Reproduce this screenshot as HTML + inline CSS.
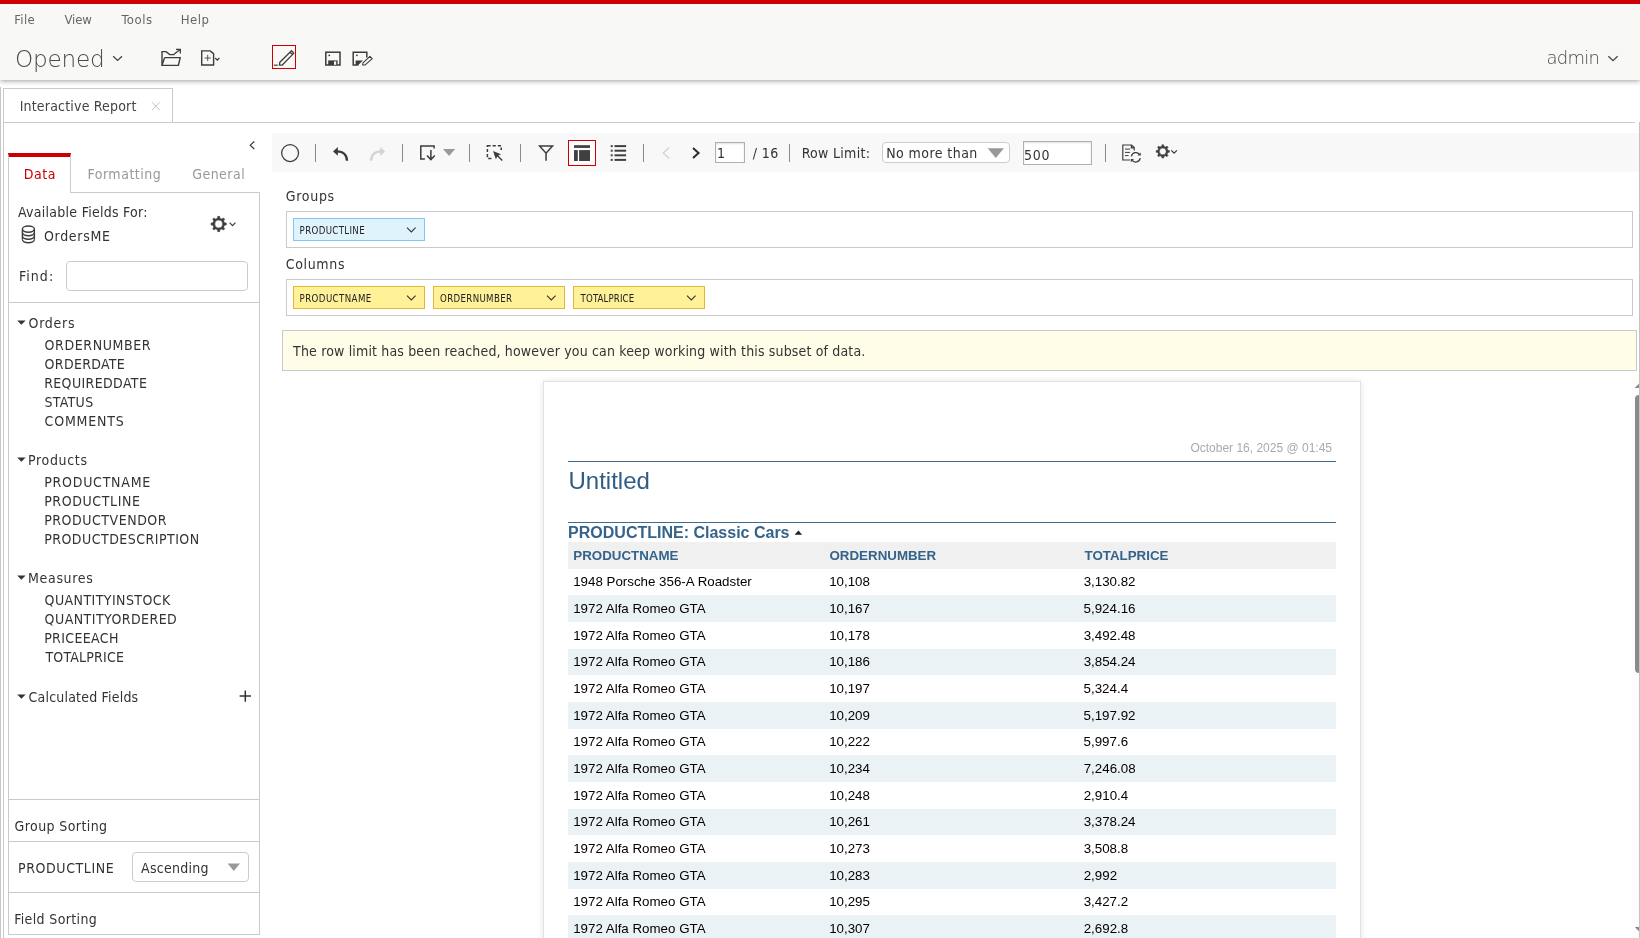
<!DOCTYPE html>
<html lang="en"><head><meta charset="utf-8"><title>Interactive Report</title>
<style>
html,body{margin:0;padding:0;}
body{width:1640px;height:938px;overflow:hidden;background:#fff;position:relative;font-family:"Liberation Sans",sans-serif;}
div,span,svg,header,nav,aside,section,main{position:absolute;box-sizing:border-box;}
.grp{left:0;top:0;width:0;height:0;}
.t{white-space:pre;line-height:1;color:#333;font-family:"Liberation Sans",sans-serif;}
.u{font-family:"DejaVu Sans Condensed","Liberation Sans",sans-serif;}
.lt{font-family:"DejaVu Sans Light","DejaVu Sans","Liberation Sans",sans-serif;font-weight:200;}
#redbar{left:0;top:0;width:1640px;height:4px;background:#cc0000;}
#header{left:0;top:4px;width:1640px;height:76px;background:#f8f8f6;box-shadow:0 1px 5px rgba(0,0,0,.38);}
#editbtn{left:272px;top:45px;width:24px;height:24px;border:1px solid #cc0000;}
#edge0{left:0;top:87px;width:1px;height:851px;background:#c6c6c6;}
#edge1{left:3px;top:88px;width:1px;height:850px;background:#cacaca;}
#tab{left:3px;top:88px;width:170px;height:35px;border:1px solid #cacaca;background:#fff;}
#tabline{left:3px;top:122px;width:1632px;height:1px;background:#cacaca;}
#rightedge{left:1639px;top:122px;width:1px;height:816px;background:#c4c4c4;}
/* side panel */
#ptab{left:8px;top:153px;width:63px;height:40px;border:1px solid #cacaca;border-top:4px solid #cc0000;border-bottom:none;background:#fff;}
#panel{left:8px;top:192px;width:252px;height:743px;border:1px solid #cacaca;}
#ptabcover{left:9px;top:192px;width:61px;height:1px;background:#fff;}
.hl{left:9px;width:250px;height:1px;background:#cacaca;}
#find{left:66px;top:261px;width:182px;height:30px;border:1px solid #ccc;border-radius:4px;background:#fff;}
#sortsel{left:132px;top:852px;width:117px;height:30px;border:1px solid #ccc;border-radius:4px;background:#fff;}
/* toolbar */
#toolbar{left:272px;top:133px;width:1368px;height:39px;background:#f8f8f8;}
.sep{top:144px;width:1px;height:18px;background:#8a8a8a;}
#layoutbtn{left:568px;top:140px;width:28px;height:26px;border:1px solid #cc0000;background:#fdfdfd;}
#pageinp{left:715px;top:142px;width:30px;height:21px;border:1px solid #b0b0b0;background:#fff;box-shadow:inset 0 1px 2px rgba(0,0,0,.12);}
#limsel{left:882px;top:142px;width:128px;height:21px;border:1px solid #ccc;border-radius:4px;background:#fff;}
#liminp{left:1023px;top:141px;width:69px;height:24px;border:1px solid #b0b0b0;background:#fff;box-shadow:inset 0 1px 2px rgba(0,0,0,.12);}
/* layout zones */
.zone{left:286px;width:1347px;height:37px;border:1px solid #cacaca;background:#fff;}
.chip{width:132px;height:23px;border:1px solid;}
.chip.g{background:#dff3fc;border-color:#80c8f0;}
.chip.c{background:#fef198;border-color:#e0b93a;}
#msg{left:282px;top:330px;width:1355px;height:41px;border:1px solid #cacaca;background:#fffde7;}
/* report */
#page{left:543px;top:381px;width:818px;height:600px;background:#fff;border:1px solid #e2e2e2;box-shadow:0 0 7px rgba(0,0,0,.10);}
.rule{left:568px;width:768px;height:1px;background:#3f6b8f;}
.row{left:568px;width:768px;height:26.67px;}
.row.h{background:#f0f0f0;}
.row.a{background:#ebf2f6;}
/* scrollbar */
#sbtrack{left:1632px;top:377px;width:7px;height:561px;background:#fcfcfc;}
#sbthumb{left:1635px;top:395px;width:8px;height:278px;background:#8a8a8a;border-radius:4px;}
#sbclip{left:1632px;top:381px;width:7px;height:557px;overflow:hidden;}
.tx{left:0;top:0;width:1640px;height:938px;will-change:transform;}

</style></head>
<body>
<div id="app-frame" class="grp">
<div id="edge0"></div>
<div id="edge1"></div>
</div>
<header id="app-header" class="grp">
<div id="header"></div>
<div id="redbar"></div>
<div id="editbtn"></div>
<svg style="left:110px;top:52px" width="16" height="12" viewBox="110 52 16 12" fill="none" stroke-linecap="butt"><path d="M113.2 56.2 L117.6 60.4 L122 56.2" stroke="#444" stroke-width="1.3"/></svg>
<svg style="left:158px;top:46px" width="26" height="24" viewBox="158 46 26 24" fill="none" stroke-linecap="butt"><path d="M162 65.4 V51.6 H166 L169.8 54.6 H174.4 M164.6 57.6 H180.2 L178.4 65.4 H162 L164.6 57.6" stroke="#3c3c3c" stroke-width="1.4" stroke-linejoin="miter"/><path d="M174 54.2 L180 49.5 M176 49.3 H180.3 V53.6" stroke="#3c3c3c" stroke-width="1.3"/></svg>
<svg style="left:198px;top:46px" width="26" height="24" viewBox="198 46 26 24" fill="none" stroke-linecap="butt"><path d="M201.7 50.9 H210.2 L213.6 53.6 V65 H201.7 Z" stroke="#3c3c3c" stroke-width="1.4"/><path d="M204.6 58 H210.8 M207.7 54.9 V61" stroke="#555" stroke-width="1"/><path d="M215.2 58 L217.3 60.1 L219.4 58" stroke="#3c3c3c" stroke-width="1.3"/></svg>
<svg style="left:272px;top:45px" width="24" height="24" viewBox="272 45 24 24" fill="none" stroke-linecap="butt"><path d="M279.4 65.1 L279.8 62.3 L291.5 50.8 L293.9 53.1 L282.3 65 Z M290 52.3 L292.5 54.6" stroke="#3c3c3c" stroke-width="1.3" stroke-linejoin="round"/><path d="M273.8 65.2 H277.8" stroke="#3c3c3c" stroke-width="1.2"/></svg>
<svg style="left:322px;top:48px" width="22" height="22" viewBox="322 48 22 22" fill="none" stroke-linecap="butt"><rect x="325.8" y="52.2" width="14.2" height="12.8" stroke="#3c3c3c" stroke-width="1.5"/><path d="M328.2 60.4 H337.6 V65 H328.2Z" fill="#3c3c3c"/><rect x="334" y="61.4" width="2.2" height="3.4" fill="#f8f8f6"/><circle cx="329.3" cy="55.3" r="0.9" fill="#3c3c3c"/></svg>
<svg style="left:350px;top:48px" width="26" height="22" viewBox="350 48 26 22" fill="none" stroke-linecap="butt"><path d="M366.8 57.5 V52.2 H353.2 V65 H358.5" stroke="#3c3c3c" stroke-width="1.5"/><path d="M355.6 60.4 H363 L358.2 65 H355.6Z" fill="#3c3c3c"/><circle cx="356.9" cy="55.3" r="0.9" fill="#3c3c3c"/><path d="M362.6 65 L363 62.8 L369.9 56.4 L372.2 58.6 L365.2 64.9 Z" stroke="#3c3c3c" stroke-width="1.1" stroke-linejoin="round"/></svg>
<svg style="left:1604px;top:52px" width="16" height="12" viewBox="1604 52 16 12" fill="none" stroke-linecap="butt"><path d="M1608.4 56.3 L1613 60.6 L1617.6 56.3" stroke="#444" stroke-width="1.3"/></svg>
<div class="tx">
<span class="t u" style="left:14.22px;top:13px;font-size:13px;color:#666;letter-spacing:0.369px;">File</span>
<span class="t u" style="left:64.41px;top:13px;font-size:13px;color:#666;letter-spacing:-0.116px;">View</span>
<span class="t u" style="left:121.40px;top:13px;font-size:13px;color:#666;letter-spacing:0.506px;">Tools</span>
<span class="t u" style="left:180.82px;top:13px;font-size:13px;color:#666;letter-spacing:0.485px;">Help</span>
<span class="t lt" style="left:15.00px;top:47px;font-size:23.2px;color:#4a4a4a;letter-spacing:-0.262px;">Opened</span>
<span class="t lt" style="left:1546.45px;top:49px;font-size:18px;color:#4a4a4a;letter-spacing:-0.720px;">admin</span>
</div>
</header>
<nav id="tab-bar" class="grp">
<div id="tabline"></div>
<div id="tab"></div>
<svg style="left:148px;top:98px" width="16" height="16" viewBox="148 98 16 16" fill="none" stroke-linecap="butt"><path d="M152 102.2 L159.6 110 M159.6 102.2 L152 110" stroke="#c4c4c4" stroke-width="1"/></svg>
<div class="tx">
<span class="t u" style="left:19.64px;top:99px;font-size:14px;color:#444;letter-spacing:0.192px;">Interactive Report</span>
</div>
</nav>
<aside id="side-panel" class="grp">
<div id="panel"></div>
<div id="ptab"></div>
<div id="ptabcover"></div>
<div class="hl" style="top:302px"></div>
<div class="hl" style="top:799px"></div>
<div class="hl" style="top:841px"></div>
<div class="hl" style="top:892px"></div>
<div id="find"></div>
<div id="sortsel"></div>
<svg style="left:246px;top:138px" width="12" height="14" viewBox="246 138 12 14" fill="none" stroke-linecap="butt"><path d="M254.3 141.5 L250.2 145.2 L254.3 149" stroke="#333" stroke-width="1.1"/></svg>
<svg style="left:20px;top:224px" width="18" height="22" viewBox="20 224 18 22" fill="none" stroke-linecap="butt"><ellipse cx="28.4" cy="229.1" rx="6" ry="3.1" stroke="#3c3c3c" stroke-width="1.35"/><path d="M22.4 229.1 V239.6 M34.4 229.1 V239.6" stroke="#3c3c3c" stroke-width="1.35"/><path d="M22.4 232.6 A6 3.1 0 0 0 34.4 232.6" stroke="#3c3c3c" stroke-width="1.35"/><path d="M22.4 236.1 A6 3.1 0 0 0 34.4 236.1" stroke="#3c3c3c" stroke-width="1.35"/><path d="M22.4 239.6 A6 3.1 0 0 0 34.4 239.6" stroke="#3c3c3c" stroke-width="1.35"/></svg>
<svg style="left:208px;top:213px" width="32" height="22" viewBox="208 213 32 22" fill="none" stroke-linecap="butt"><path d="M217.55 218.21 L217.67 216.37 L219.73 216.37 L219.85 218.21 L221.98 219.09 L223.37 217.88 L224.82 219.33 L223.61 220.72 L224.49 222.85 L226.33 222.97 L226.33 225.03 L224.49 225.15 L223.61 227.28 L224.82 228.67 L223.37 230.12 L221.98 228.91 L219.85 229.79 L219.73 231.63 L217.67 231.63 L217.55 229.79 L215.42 228.91 L214.03 230.12 L212.58 228.67 L213.79 227.28 L212.91 225.15 L211.07 225.03 L211.07 222.97 L212.91 222.85 L213.79 220.72 L212.58 219.33 L214.03 217.88 L215.42 219.09Z M214.80 224.00 a3.9 3.9 0 1 0 7.8 0 a3.9 3.9 0 1 0 -7.8 0Z" fill="#3c3c3c" fill-rule="evenodd" stroke="#3c3c3c" stroke-width="0.5" stroke-linejoin="round"/><path d="M229.6 222.6 L232.5 225.6 L235.4 222.6" stroke="#3c3c3c" stroke-width="1.2"/></svg>
<svg style="left:16px;top:319px" width="12" height="8" viewBox="16 319 12 8" fill="none" stroke-linecap="butt"><path d="M17.2 320.4 H25.6 L21.4 324.8Z" fill="#333"/></svg>
<svg style="left:16px;top:456px" width="12" height="8" viewBox="16 456 12 8" fill="none" stroke-linecap="butt"><path d="M17.2 457.4 H25.6 L21.4 461.8Z" fill="#333"/></svg>
<svg style="left:16px;top:574px" width="12" height="8" viewBox="16 574 12 8" fill="none" stroke-linecap="butt"><path d="M17.2 575.4 H25.6 L21.4 579.8Z" fill="#333"/></svg>
<svg style="left:16px;top:693px" width="12" height="8" viewBox="16 693 12 8" fill="none" stroke-linecap="butt"><path d="M17.2 694.4 H25.6 L21.4 698.8Z" fill="#333"/></svg>
<svg style="left:238px;top:688px" width="16" height="16" viewBox="238 688 16 16" fill="none" stroke-linecap="butt"><path d="M239.6 696.1 H251 M245.3 690.4 V701.8" stroke="#333" stroke-width="1.5"/></svg>
<svg style="left:226px;top:862px" width="16" height="10" viewBox="226 862 16 10" fill="none" stroke-linecap="butt"><path d="M227.6 863.6 H240 L233.8 871Z" fill="#999"/></svg>
<div class="tx">
<span class="t u" style="left:23.75px;top:167px;font-size:14px;color:#cc0000;letter-spacing:0.573px;">Data</span>
<span class="t u" style="left:87.45px;top:167px;font-size:14px;color:#999;letter-spacing:0.519px;">Formatting</span>
<span class="t u" style="left:192.22px;top:167px;font-size:14px;color:#999;letter-spacing:0.465px;">General</span>
<span class="t u" style="left:18.01px;top:205px;font-size:14px;letter-spacing:0.272px;">Available Fields For:</span>
<span class="t u" style="left:43.92px;top:229px;font-size:14px;letter-spacing:0.703px;">OrdersME</span>
<span class="t u" style="left:19.05px;top:269px;font-size:14px;letter-spacing:1.033px;">Find:</span>
<span class="t u" style="left:28.52px;top:316px;font-size:14px;letter-spacing:0.737px;">Orders</span>
<span class="t u" style="left:44.62px;top:338px;font-size:14px;letter-spacing:0.592px;">ORDERNUMBER</span>
<span class="t u" style="left:44.62px;top:357px;font-size:14px;letter-spacing:0.304px;">ORDERDATE</span>
<span class="t u" style="left:44.15px;top:376px;font-size:14px;letter-spacing:0.374px;">REQUIREDDATE</span>
<span class="t u" style="left:44.40px;top:395px;font-size:14px;letter-spacing:0.345px;">STATUS</span>
<span class="t u" style="left:44.62px;top:414px;font-size:14px;letter-spacing:0.805px;">COMMENTS</span>
<span class="t u" style="left:28.05px;top:453px;font-size:14px;letter-spacing:0.655px;">Products</span>
<span class="t u" style="left:44.15px;top:475px;font-size:14px;letter-spacing:0.758px;">PRODUCTNAME</span>
<span class="t u" style="left:44.15px;top:494px;font-size:14px;letter-spacing:0.604px;">PRODUCTLINE</span>
<span class="t u" style="left:44.15px;top:513px;font-size:14px;letter-spacing:0.533px;">PRODUCTVENDOR</span>
<span class="t u" style="left:44.15px;top:532px;font-size:14px;letter-spacing:0.476px;">PRODUCTDESCRIPTION</span>
<span class="t u" style="left:28.05px;top:571px;font-size:14px;letter-spacing:0.664px;">Measures</span>
<span class="t u" style="left:44.62px;top:593px;font-size:14px;letter-spacing:0.421px;">QUANTITYINSTOCK</span>
<span class="t u" style="left:44.62px;top:612px;font-size:14px;letter-spacing:0.450px;">QUANTITYORDERED</span>
<span class="t u" style="left:44.15px;top:631px;font-size:14px;letter-spacing:0.367px;">PRICEEACH</span>
<span class="t u" style="left:45.40px;top:650px;font-size:14px;letter-spacing:0.203px;">TOTALPRICE</span>
<span class="t u" style="left:28.52px;top:690px;font-size:14px;letter-spacing:0.206px;">Calculated Fields</span>
<span class="t u" style="left:14.62px;top:819px;font-size:14px;letter-spacing:0.406px;">Group Sorting</span>
<span class="t u" style="left:18.05px;top:861px;font-size:14px;letter-spacing:0.586px;">PRODUCTLINE</span>
<span class="t u" style="left:141.01px;top:861px;font-size:14px;letter-spacing:0.281px;">Ascending</span>
<span class="t u" style="left:14.15px;top:912px;font-size:14px;letter-spacing:0.369px;">Field Sorting</span>
</div>
</aside>
<section id="report-toolbar" class="grp">
<div id="toolbar"></div>
<div class="sep" style="left:315px"></div>
<div class="sep" style="left:402px"></div>
<div class="sep" style="left:469px"></div>
<div class="sep" style="left:520px"></div>
<div class="sep" style="left:643px"></div>
<div class="sep" style="left:789px"></div>
<div class="sep" style="left:1105px"></div>
<div id="layoutbtn"></div>
<div id="pageinp"></div>
<div id="limsel"></div>
<div id="liminp"></div>
<svg style="left:986px;top:147px" width="20" height="12" viewBox="986 147 20 12" fill="none" stroke-linecap="butt"><path d="M987.7 148.2 H1003.9 L995.8 158Z" fill="#999"/></svg>
<svg style="left:279px;top:142px" width="22" height="22" viewBox="279 142 22 22" fill="none" stroke-linecap="butt"><circle cx="290.1" cy="153.05" r="8.45" stroke="#3c3c3c" stroke-width="1.25"/></svg>
<svg style="left:331px;top:144px" width="20" height="19" viewBox="331 144 20 19" fill="none" stroke-linecap="butt"><path d="M337 151.4 C343 151.4 346.8 155 347 160.7" stroke="#3c3c3c" stroke-width="2.4"/><path d="M333 151.4 L337.9 147 V155.8Z" fill="#3c3c3c"/></svg>
<svg style="left:367px;top:144px" width="20" height="19" viewBox="367 144 20 19" fill="none" stroke-linecap="butt"><path d="M381.1 151.4 C375.1 151.4 371.3 155 371.1 160.7" stroke="#d2d2d2" stroke-width="2.4"/><path d="M385.1 151.4 L380.2 147 V155.8Z" fill="#d2d2d2"/></svg>
<svg style="left:418px;top:143px" width="40" height="20" viewBox="418 143 40 20" fill="none" stroke-linecap="butt"><path d="M424.9 158.9 H420.8 V146.1 H434.1 V148.6" stroke="#3c3c3c" stroke-width="1.5"/><path d="M430.9 150.1 V159.6 M427 155.4 L430.9 159.6 L434.8 155.4" stroke="#3c3c3c" stroke-width="1.5"/><path d="M443 149.1 H455.2 L449.1 155.9Z" fill="#999"/></svg>
<svg style="left:484px;top:143px" width="22" height="20" viewBox="484 143 22 20" fill="none" stroke-linecap="butt"><rect x="487.4" y="145.7" width="13.8" height="12.8" stroke="#3c3c3c" stroke-width="1.5" stroke-dasharray="3.2 2"/><rect x="492" y="150" width="12" height="12" fill="#f8f8f8"/><path d="M493 151 L501 154.2 L498.3 155.6 L502.8 160 L501.8 161 L497.3 156.6 L495.9 159.3Z" fill="#3c3c3c"/></svg>
<svg style="left:536px;top:143px" width="20" height="20" viewBox="536 143 20 20" fill="none" stroke-linecap="butt"><path d="M539.6 146.1 H552.5 L546.05 153.2 Z M546.05 153 V160.7" stroke="#3c3c3c" stroke-width="1.5" stroke-linejoin="miter"/></svg>
<svg style="left:572px;top:144px" width="20" height="18" viewBox="572 144 20 18" fill="none" stroke-linecap="butt"><rect x="574" y="145.2" width="16" height="2.7" fill="#404040"/><rect x="574" y="150.1" width="3.8" height="10.9" fill="#404040"/><rect x="579.1" y="150.1" width="10.9" height="10.9" fill="#404040"/></svg>
<svg style="left:609px;top:144px" width="19" height="18" viewBox="609 144 19 18" fill="none" stroke-linecap="butt"><rect x="610.7" y="145.1" width="2" height="2" fill="#404040"/><rect x="614.5" y="145.1" width="11.6" height="2" fill="#404040"/><rect x="610.7" y="149.7" width="2" height="2" fill="#404040"/><rect x="614.5" y="149.7" width="11.6" height="2" fill="#404040"/><rect x="610.7" y="154.3" width="2" height="2" fill="#404040"/><rect x="614.5" y="154.3" width="11.6" height="2" fill="#404040"/><rect x="610.7" y="158.9" width="2" height="2" fill="#404040"/><rect x="614.5" y="158.9" width="11.6" height="2" fill="#404040"/></svg>
<svg style="left:660px;top:145px" width="12" height="16" viewBox="660 145 12 16" fill="none" stroke-linecap="butt"><path d="M669.2 147.4 L663.2 152.9 L669.2 158.4" stroke="#d4d4d4" stroke-width="1.4"/></svg>
<svg style="left:690px;top:145px" width="12" height="16" viewBox="690 145 12 16" fill="none" stroke-linecap="butt"><path d="M693 148 L698.6 153 L693 158.1" stroke="#2c2c2c" stroke-width="2"/></svg>
<svg style="left:1120px;top:143px" width="24" height="22" viewBox="1120 143 24 22" fill="none" stroke-linecap="butt"><path d="M1130 160 H1122.8 V145 H1131.6 L1134.2 147.6 V150.5 M1131.4 145 V147.8 H1134.2" stroke="#3c3c3c" stroke-width="1.2"/><path d="M1125 149.1 H1130.1 M1125 152.4 H1130.1 M1125 155.6 H1128.6" stroke="#3c3c3c" stroke-width="1"/><path d="M1131.4 156.4 A4.5 4.5 0 0 1 1139.6 154.6 M1140.2 158.2 A4.5 4.5 0 0 1 1132 160" stroke="#3c3c3c" stroke-width="1.3"/><path d="M1140.8 152.4 V155.6 H1137.6Z M1130.8 162.2 V159 H1134Z" fill="#3c3c3c"/></svg>
<svg style="left:1153px;top:142px" width="28" height="20" viewBox="1153 142 28 20" fill="none" stroke-linecap="butt"><path d="M1161.79 146.30 L1161.91 144.76 L1163.69 144.76 L1163.81 146.30 L1165.69 147.08 L1166.86 146.07 L1168.13 147.34 L1167.12 148.51 L1167.90 150.39 L1169.44 150.51 L1169.44 152.29 L1167.90 152.41 L1167.12 154.29 L1168.13 155.46 L1166.86 156.73 L1165.69 155.72 L1163.81 156.50 L1163.69 158.04 L1161.91 158.04 L1161.79 156.50 L1159.91 155.72 L1158.74 156.73 L1157.47 155.46 L1158.48 154.29 L1157.70 152.41 L1156.16 152.29 L1156.16 150.51 L1157.70 150.39 L1158.48 148.51 L1157.47 147.34 L1158.74 146.07 L1159.91 147.08Z M1159.40 151.40 a3.4 3.4 0 1 0 6.8 0 a3.4 3.4 0 1 0 -6.8 0Z" fill="#3c3c3c" fill-rule="evenodd" stroke="#3c3c3c" stroke-width="0.5" stroke-linejoin="round"/><path d="M1171.3 150.4 L1174.1 153.2 L1176.9 150.4" stroke="#3c3c3c" stroke-width="1.3"/></svg>
<div class="tx">
<span class="t u" style="left:717.03px;top:146px;font-size:14px;">1</span>
<span class="t u" style="left:752.70px;top:146px;font-size:14px;letter-spacing:0.426px;">/ 16</span>
<span class="t u" style="left:801.65px;top:146px;font-size:14px;letter-spacing:0.304px;">Row Limit:</span>
<span class="t u" style="left:886.15px;top:146px;font-size:14px;letter-spacing:0.436px;">No more than</span>
<span class="t u" style="left:1024.00px;top:148px;font-size:14px;letter-spacing:0.778px;">500</span>
</div>
</section>
<section id="layout-zones" class="grp">
<div class="zone" style="top:211px"></div>
<div class="zone" style="top:279px"></div>
<div class="chip g" style="left:293px;top:218px"></div>
<div class="chip c" style="left:293px;top:286px"></div>
<div class="chip c" style="left:433px;top:286px"></div>
<div class="chip c" style="left:573px;top:286px"></div>
<div id="msg"></div>
<svg style="left:405px;top:225px" width="14" height="10" viewBox="405 225 14 10" fill="none" stroke-linecap="butt"><path d="M407 227.7 L411.3 231.9 L415.6 227.7" stroke="#333" stroke-width="1.1"/></svg>
<svg style="left:405px;top:293px" width="14" height="10" viewBox="405 293 14 10" fill="none" stroke-linecap="butt"><path d="M407 295.7 L411.3 299.9 L415.6 295.7" stroke="#333" stroke-width="1.1"/></svg>
<svg style="left:545px;top:293px" width="14" height="10" viewBox="545 293 14 10" fill="none" stroke-linecap="butt"><path d="M547 295.7 L551.3 299.9 L555.6 295.7" stroke="#333" stroke-width="1.1"/></svg>
<svg style="left:685px;top:293px" width="14" height="10" viewBox="685 293 14 10" fill="none" stroke-linecap="butt"><path d="M687 295.7 L691.3 299.9 L695.6 295.7" stroke="#333" stroke-width="1.1"/></svg>
<div class="tx">
<span class="t u" style="left:285.72px;top:189px;font-size:14px;letter-spacing:0.715px;">Groups</span>
<span class="t u" style="left:285.72px;top:257px;font-size:14px;letter-spacing:0.656px;">Columns</span>
<span class="t u" style="left:299.60px;top:226px;font-size:9.6px;color:#222;letter-spacing:0.351px;">PRODUCTLINE</span>
<span class="t u" style="left:299.60px;top:294px;font-size:9.6px;color:#222;letter-spacing:0.411px;">PRODUCTNAME</span>
<span class="t u" style="left:440.05px;top:294px;font-size:9.6px;color:#222;letter-spacing:0.344px;">ORDERNUMBER</span>
<span class="t u" style="left:580.60px;top:294px;font-size:9.6px;color:#222;letter-spacing:0.123px;">TOTALPRICE</span>
<span class="t u" style="left:293.10px;top:344px;font-size:14px;letter-spacing:0.157px;">The row limit has been reached, however you can keep working with this subset of data.</span>
</div>
</section>
<main id="report-view" class="grp">
<div id="page"></div>
<div class="rule" style="top:461px"></div>
<div class="rule" style="top:522px"></div>
<div class="row h" style="top:542px"></div>
<div class="row a" style="top:595.34px"></div>
<div class="row a" style="top:648.67px"></div>
<div class="row a" style="top:702.00px"></div>
<div class="row a" style="top:755.34px"></div>
<div class="row a" style="top:808.67px"></div>
<div class="row a" style="top:862.01px"></div>
<div class="row a" style="top:915.34px"></div>
<div id="sbtrack"></div>
<div id="sbclip"><div id="sbthumb" style="left:3px;top:14px"></div></div>
<svg style="left:793px;top:529px" width="12" height="8" viewBox="793 529 12 8" fill="none" stroke-linecap="butt"><path d="M794.6 534.8 H802.2 L798.4 530.4Z" fill="#222"/></svg>
<svg style="left:1632px;top:381px" width="8" height="8" viewBox="1632 381 8 8" fill="none" stroke-linecap="butt"><path d="M1634.6 387.9 H1639 V383.7Z" fill="#888"/></svg>
<svg style="left:1632px;top:925px" width="8" height="8" viewBox="1632 925 8 8" fill="none" stroke-linecap="butt"><path d="M1634.8 927 H1639 V931.2Z" fill="#888"/></svg>
<div class="tx">
<span class="t" style="left:1190.40px;top:442px;font-size:12px;color:#aaaaaa;">October 16, 2025 @ 01:45</span>
<span class="t" style="left:568.50px;top:469px;font-size:24px;color:#2f5d84;">Untitled</span>
<span class="t" style="left:568.11px;top:525px;font-size:16px;color:#35638a;font-weight:700;">PRODUCTLINE: Classic Cars</span>
<span class="t" style="left:573.30px;top:549px;font-size:13.333px;color:#35638a;font-weight:700;">PRODUCTNAME</span>
<span class="t" style="left:829.50px;top:549px;font-size:13.333px;color:#35638a;font-weight:700;">ORDERNUMBER</span>
<span class="t" style="left:1084.52px;top:549px;font-size:13.333px;color:#35638a;font-weight:700;">TOTALPRICE</span>
<span class="t" style="left:573.18px;top:575px;font-size:13.333px;color:#000;">1948 Porsche 356-A Roadster</span>
<span class="t" style="left:829.18px;top:575px;font-size:13.333px;color:#000;">10,108</span>
<span class="t" style="left:1083.64px;top:575px;font-size:13.333px;color:#000;">3,130.82</span>
<span class="t" style="left:573.18px;top:602px;font-size:13.333px;color:#000;">1972 Alfa Romeo GTA</span>
<span class="t" style="left:829.18px;top:602px;font-size:13.333px;color:#000;">10,167</span>
<span class="t" style="left:1083.59px;top:602px;font-size:13.333px;color:#000;">5,924.16</span>
<span class="t" style="left:573.18px;top:629px;font-size:13.333px;color:#000;">1972 Alfa Romeo GTA</span>
<span class="t" style="left:829.18px;top:629px;font-size:13.333px;color:#000;">10,178</span>
<span class="t" style="left:1083.64px;top:629px;font-size:13.333px;color:#000;">3,492.48</span>
<span class="t" style="left:573.18px;top:655px;font-size:13.333px;color:#000;">1972 Alfa Romeo GTA</span>
<span class="t" style="left:829.18px;top:655px;font-size:13.333px;color:#000;">10,186</span>
<span class="t" style="left:1083.64px;top:655px;font-size:13.333px;color:#000;">3,854.24</span>
<span class="t" style="left:573.18px;top:682px;font-size:13.333px;color:#000;">1972 Alfa Romeo GTA</span>
<span class="t" style="left:829.18px;top:682px;font-size:13.333px;color:#000;">10,197</span>
<span class="t" style="left:1083.59px;top:682px;font-size:13.333px;color:#000;">5,324.4</span>
<span class="t" style="left:573.18px;top:709px;font-size:13.333px;color:#000;">1972 Alfa Romeo GTA</span>
<span class="t" style="left:829.18px;top:709px;font-size:13.333px;color:#000;">10,209</span>
<span class="t" style="left:1083.59px;top:709px;font-size:13.333px;color:#000;">5,197.92</span>
<span class="t" style="left:573.18px;top:735px;font-size:13.333px;color:#000;">1972 Alfa Romeo GTA</span>
<span class="t" style="left:829.18px;top:735px;font-size:13.333px;color:#000;">10,222</span>
<span class="t" style="left:1083.59px;top:735px;font-size:13.333px;color:#000;">5,997.6</span>
<span class="t" style="left:573.18px;top:762px;font-size:13.333px;color:#000;">1972 Alfa Romeo GTA</span>
<span class="t" style="left:829.18px;top:762px;font-size:13.333px;color:#000;">10,234</span>
<span class="t" style="left:1083.71px;top:762px;font-size:13.333px;color:#000;">7,246.08</span>
<span class="t" style="left:573.18px;top:789px;font-size:13.333px;color:#000;">1972 Alfa Romeo GTA</span>
<span class="t" style="left:829.18px;top:789px;font-size:13.333px;color:#000;">10,248</span>
<span class="t" style="left:1083.71px;top:789px;font-size:13.333px;color:#000;">2,910.4</span>
<span class="t" style="left:573.18px;top:815px;font-size:13.333px;color:#000;">1972 Alfa Romeo GTA</span>
<span class="t" style="left:829.18px;top:815px;font-size:13.333px;color:#000;">10,261</span>
<span class="t" style="left:1083.64px;top:815px;font-size:13.333px;color:#000;">3,378.24</span>
<span class="t" style="left:573.18px;top:842px;font-size:13.333px;color:#000;">1972 Alfa Romeo GTA</span>
<span class="t" style="left:829.18px;top:842px;font-size:13.333px;color:#000;">10,273</span>
<span class="t" style="left:1083.64px;top:842px;font-size:13.333px;color:#000;">3,508.8</span>
<span class="t" style="left:573.18px;top:869px;font-size:13.333px;color:#000;">1972 Alfa Romeo GTA</span>
<span class="t" style="left:829.18px;top:869px;font-size:13.333px;color:#000;">10,283</span>
<span class="t" style="left:1083.71px;top:869px;font-size:13.333px;color:#000;">2,992</span>
<span class="t" style="left:573.18px;top:895px;font-size:13.333px;color:#000;">1972 Alfa Romeo GTA</span>
<span class="t" style="left:829.18px;top:895px;font-size:13.333px;color:#000;">10,295</span>
<span class="t" style="left:1083.64px;top:895px;font-size:13.333px;color:#000;">3,427.2</span>
<span class="t" style="left:573.18px;top:922px;font-size:13.333px;color:#000;">1972 Alfa Romeo GTA</span>
<span class="t" style="left:829.18px;top:922px;font-size:13.333px;color:#000;">10,307</span>
<span class="t" style="left:1083.71px;top:922px;font-size:13.333px;color:#000;">2,692.8</span>
</div>
</main>
<div id="app-frame-right" class="grp">
<div id="rightedge"></div>
</div>
</body></html>
